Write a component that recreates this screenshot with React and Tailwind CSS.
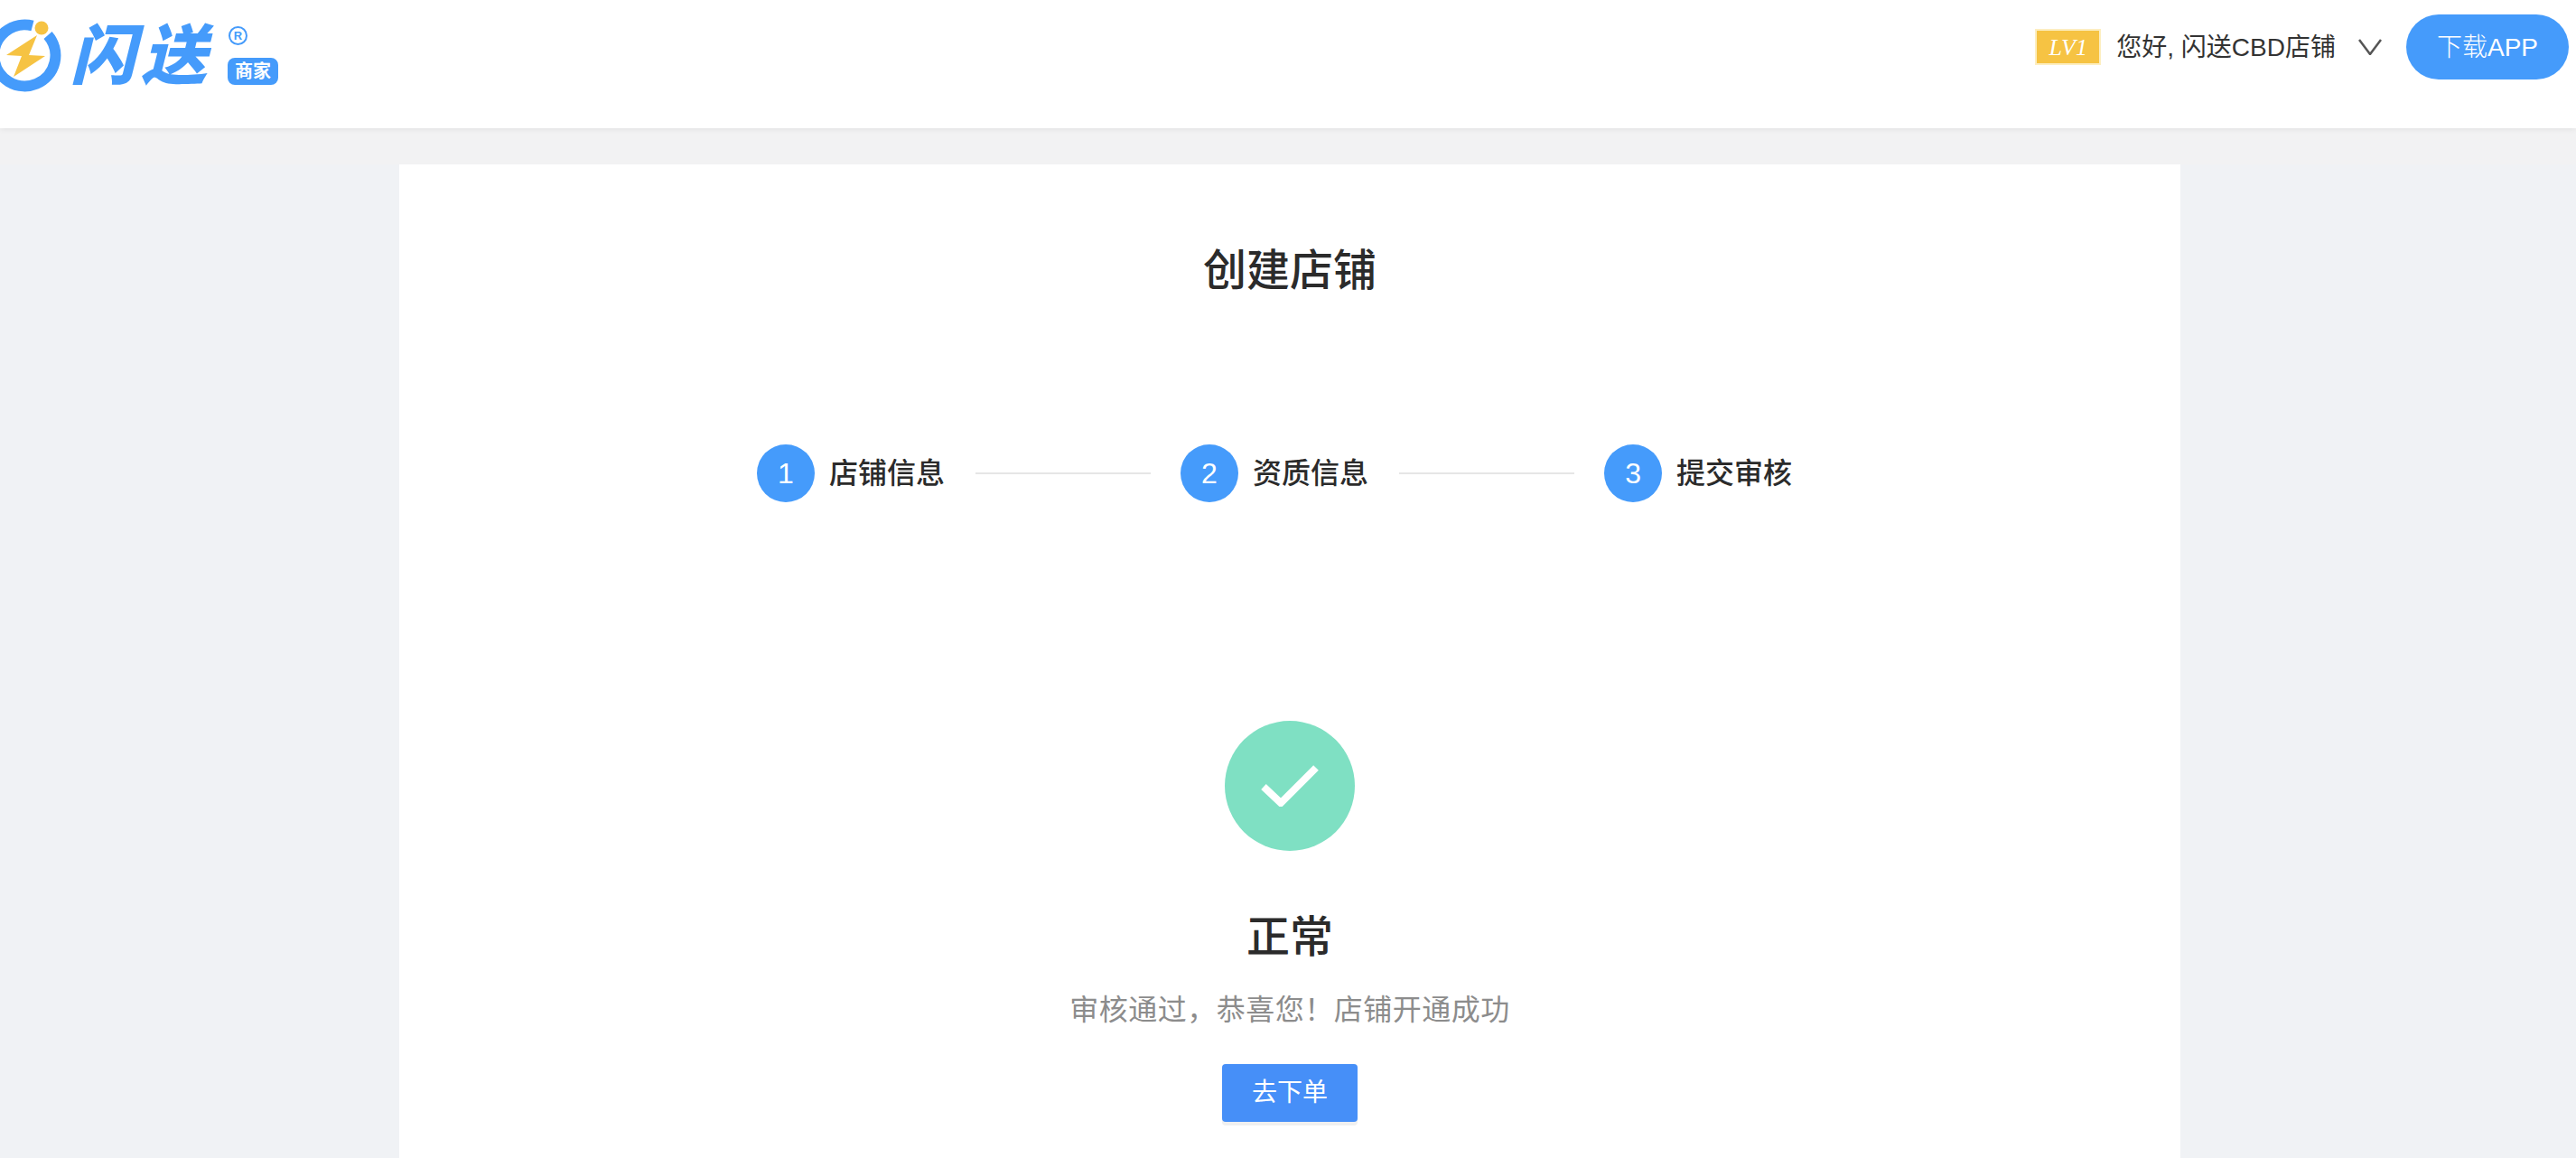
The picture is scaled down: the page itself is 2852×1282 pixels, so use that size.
import React from 'react';

const FONT = "font-['Helvetica_Neue','Liberation_Sans','Noto_Sans_CJK_SC',sans-serif]";

const steps = [
  { num: 1, label: '店铺信息' },
  { num: 2, label: '资质信息' },
  { num: 3, label: '提交审核' },
];

const Logo = () => (
  <div className="flex items-start">
    <svg width="70" height="110" viewBox="0 0 70 110" className="shrink-0">
      <path d="M36 28.5 A34 34 0 1 0 53 39" fill="none" stroke="#459bfb" strokeWidth="12" />
      <circle cx="46" cy="31" r="7.5" fill="#f6c343" />
      <path d="M41 39 L7 61 L24 62 L15 85 L50 62 L32 61 Z" fill="#f6c343" />
    </svg>
    <div className="ml-[8px] mt-[17px] h-[90px] w-[170px] shrink-0 text-[72px] leading-[90px] font-black italic text-[#459bfb] tracking-[7px]">
      闪送
    </div>
    <div className="ml-[5px] mt-[29px] flex flex-col items-start">
      <div className="flex h-[21px] w-[21px] items-center justify-center rounded-full border-2 border-[#459bfb] text-[13px] font-bold leading-none text-[#459bfb]">
        R
      </div>
      <div className="-ml-px mt-[14px] flex h-[30px] w-[56px] items-center justify-center rounded-[8px] bg-[#459bfb] text-[20px] font-bold leading-none text-white">
        商家
      </div>
    </div>
  </div>
);

const Header = () => (
  <header className="relative z-10 flex h-[142px] items-start justify-between bg-white pr-[8px] shadow-[0_1px_6px_rgba(0,0,0,0.08)]">
    <Logo />
    <div className="mt-[16px] flex h-[72px] items-center">
      <div className="flex h-[40px] w-[73px] items-center justify-center border-2 border-[#fdeec0] bg-[#f6c343] font-['Liberation_Serif',serif] text-[26px] italic text-white">
        LV1
      </div>
      <span className="ml-[17px] pt-[2px] text-[28px] leading-none text-[#333333]">您好, 闪送CBD店铺</span>
      <svg width="26" height="18" viewBox="0 0 26 18" className="ml-[25px]">
        <path d="M1 1 L13 17 L25 1" fill="none" stroke="#555555" strokeWidth="2.5" />
      </svg>
      <button className="ml-[27px] h-[72px] w-[180px] rounded-full bg-[#459bfb] pt-[2px] text-[28px] font-light text-white">
        下载APP
      </button>
    </div>
  </header>
);

const Stepper = () => (
  <div className="mt-[162px] flex items-center pl-[396px]">
    {steps.map((step, i) => (
      <React.Fragment key={step.num}>
        <div className="flex h-[64px] w-[64px] items-center justify-center rounded-full bg-[#459bfb] text-[32px] font-light text-white">
          {step.num}
        </div>
        <span className="ml-[16px] text-[32px] font-medium leading-none text-[#2b2b2b]">{step.label}</span>
        {i < steps.length - 1 && <div className="ml-[34px] mr-[33px] h-[2px] w-[194px] bg-[#e6e6e6]" />}
      </React.Fragment>
    ))}
  </div>
);

const Result = () => (
  <div className="mt-[242px] flex flex-col items-center">
    <div className="flex h-[144px] w-[144px] items-center justify-center rounded-full bg-[#7fe0c3]">
      <svg width="64" height="46" viewBox="0 0 64 46">
        <path d="M3 24 L22 42 L61 3" fill="none" stroke="#ffffff" strokeWidth="8" />
      </svg>
    </div>
    <h2 className="mt-[66px] text-[48px] font-medium leading-[60px] text-[#2b2b2b]">正常</h2>
    <p className="mt-[28px] text-[32px] leading-[44px] tracking-[0.5px] text-[#8c8c8c]">审核通过，恭喜您！店铺开通成功</p>
    <button className="mt-[38px] h-[64px] w-[150px] rounded-[4px] bg-[#468ff8] text-[28px] text-white shadow-[0_4px_0_#f0f0f0]">
      去下单
    </button>
  </div>
);

export default function App() {
  return (
    <div className={`flex h-[1282px] flex-col overflow-hidden bg-[#f0f2f5] ${FONT}`}>
      <Header />
      <div className="h-[40px] shrink-0 bg-[#f2f2f3]" />
      <main className="ml-[442px] w-[1972px] flex-1 bg-white">
        <h1 className="pt-[88px] text-center text-[48px] font-medium leading-[60px] text-[#2b2b2b]">创建店铺</h1>
        <Stepper />
        <Result />
      </main>
    </div>
  );
}
